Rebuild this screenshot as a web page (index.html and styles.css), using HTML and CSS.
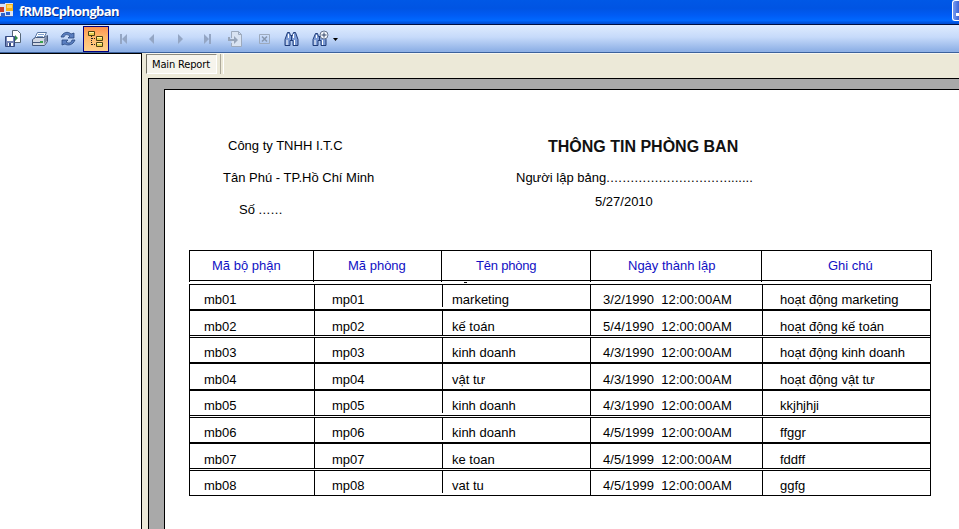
FILE: index.html
```html
<!DOCTYPE html>
<html lang="vi">
<head>
<meta charset="utf-8">
<title>fRMBCphongban</title>
<link rel="stylesheet" href="styles.css">
</head>
<body>
<div class="window">
  <header class="titlebar">
    <svg class="app-icon" width="14" height="16" viewBox="0 0 14 16"><path fill="#d9e4f7" d="M0 1h13v14H0z"/><path fill="#3a5fb5" d="M0 1h5v1H0zM0 14h13v1H0z"/><path fill="#c8402c" d="M0 5h4v5H0z"/><path fill="#f7b51c" d="M6 2h7v7H6z"/><path fill="#ffd968" d="M7 3h5v3H7z"/><path fill="#2d62cd" d="M1 11h4v3H1zM6 10h4v3H6z"/></svg>
    <span class="caption">fRMBCphongban</span>
    <span class="minimize"></span>
  </header>
  <nav class="toolbar">
    <span class="tool"><svg width="18" height="18" viewBox="0 0 18 18"><path fill="#fff" stroke="#567" d="M8.500.5h5l3 3v9h-8z"/><path fill="#2e8b45" d="M11 5l3 3-3 3V9H9V7h2z"/><path fill="#7584b5" stroke="#354a80" d="M1.500 6.500h9v10h-9z"/><path fill="#fff" d="M3 7h6v4H3zM4 13h5v3H4z"/><path fill="#354a80" d="M5 13h2v3H5z"/></svg></span>
    <span class="tool"><svg width="18" height="18" viewBox="0 0 18 18"><path fill="#fff" stroke="#5877a4" d="M6.500 2.500h9l-3 6h-9z"/><path stroke="#7da0cc" d="M7 4.500h6M6 6.500h6"/><path fill="#d2d8e4" stroke="#46597c" d="M1.500 9.500l3-2h9l3-2v6l-3 4h-12z"/><path fill="#7b8ba8" d="M13 9l3-3v5l-3 3z"/><path fill="#38a14c" d="M9 11h3v2H9z"/><path stroke="#46597c" d="M2 12.500h7"/></svg></span>
    <span class="tool"><svg width="18" height="18" viewBox="0 0 18 18"><g fill="#5b7fc1" stroke="#28477f" stroke-width=".8"><path d="M2 7C4 2 9 1 12 4l3-1v5H9l2-2C8 4 6 4 5 7z"/><path d="M16 10c-2 5-7 6-10 4l-3 1v-5h6l-2 2c3 2 5 1 6-2z"/></g></svg></span>
    <span class="tool active"><svg width="18" height="18" viewBox="0 0 18 18"><path fill="none" stroke="#222" stroke-dasharray="1 1" d="M4.500 6v10M5 8.500h4M5 14.500h4"/><path fill="#e9cf52" stroke="#4c4312" d="M1.500 1.500h6v4h-6zM9.500 6.500h6v4h-6zM9.500 12.500h6v4h-6z"/><path stroke="#fff3a2" d="M2 2.500h5M10 7.500h5M10 13.500h5"/></svg></span>
    <span class="tool"><svg width="18" height="18" viewBox="0 0 18 18"><path fill="#94a6c4" d="M5 4h2v10H5zM12 4v10L7 9z"/></svg></span>
    <span class="tool"><svg width="18" height="18" viewBox="0 0 18 18"><path fill="#94a6c4" d="M11 4v10L6 9z"/></svg></span>
    <span class="tool"><svg width="18" height="18" viewBox="0 0 18 18"><path fill="#94a6c4" d="M7 4v10l5-5z"/></svg></span>
    <span class="tool"><svg width="18" height="18" viewBox="0 0 18 18"><path fill="#94a6c4" d="M5 4v10l5-5zM10 4h2v10h-2z"/></svg></span>
    <span class="tool"><svg width="18" height="18" viewBox="0 0 18 18"><path fill="#d9e3f2" stroke="#9daabd" d="M4.500 8V1.500h7l3 3v12h-10V13M11.500 1.500v3h3"/><path fill="none" stroke="#97a5ba" stroke-width="2" d="M2 7v3h7"/><path fill="#97a5ba" d="M7 6l4 4-4 4z"/></svg></span>
    <span class="tool"><svg width="18" height="18" viewBox="0 0 18 18"><path fill="none" stroke="#9daabd" d="M4.500 4.500h10v9h-10z"/><path stroke="#8797af" stroke-width="1.600" d="M7 6.500l5 5M12 6.500l-5 5"/></svg></span>
    <span class="tool"><svg width="18" height="18" viewBox="0 0 18 18"><path fill="#7d9cd6" stroke="#203c78" d="M4.500 2.500h2l1 3h2l1-3h2l2.500 7v6h-5v-5h-3v5h-5v-6z"/><path stroke="#fff" d="M4 10v5M11.500 10v5M5.500 4v4M10.500 4v4"/><path stroke="#203c78" d="M8.500 6v4"/></svg></span>
    <span class="tool wide"><svg width="28" height="18" viewBox="0 0 28 18"><path fill="#7d9cd6" stroke="#203c78" d="M4.500 3.500h2l1 3h2l1-3h2l2.500 6v6h-5v-5h-3v5h-5v-6z"/><path stroke="#fff" d="M4 10v5M11.500 10v5M5.500 5v3"/><path stroke="#203c78" d="M8.500 7v3"/><circle cx="13" cy="5" r="4" fill="#f4f7fc" stroke="#64738f"/><path stroke="#344668" d="M13 2.500v5M10.500 5h5"/><path fill="#000" d="M22 8h5l-2.500 3z"/></svg></span>
  </nav>
  <main class="workspace">
    <aside class="group-tree"></aside>
    <section class="viewer">
      <div class="tabs"><span class="tab">Main Report</span></div>
      <div class="canvas">
        <article class="page">
          <div class="heading">
            <div class="company">
              <p class="name clip">Công ty TNHH I.T.C</p>
              <p class="address">Tân Phú - TP.Hồ Chí Minh</p>
              <p class="number">Số <span class="dots">......</span></p>
            </div>
            <div class="report">
              <h1>THÔNG TIN PHÒNG BAN</h1>
              <p class="author">Người lập bảng<span class="dots">..............................</span><span>.......</span></p>
              <p class="date">5/27/2010</p>
            </div>
          </div>
          <div class="columns"><span>Mã bộ phận</span><span>Mã phòng</span><span>Tên phòng</span><span>Ngày thành lập</span><span>Ghi chú</span></div>
          <div class="dash"></div>
          <div class="rows">
            <div class="row short"><span>mb01</span><span>mp01</span><span>marketing</span><span>3/2/1990&nbsp; 12:00:00AM</span><span>hoạt động marketing</span></div>
            <div class="row low"><span>mb02</span><span>mp02</span><span>kế toán</span><span>5/4/1990&nbsp; 12:00:00AM</span><span>hoạt động kế toán</span></div>
            <div class="row gap"><span>mb03</span><span>mp03</span><span>kinh doanh</span><span>4/3/1990&nbsp; 12:00:00AM</span><span>hoạt động kinh doanh</span></div>
            <div class="row low tall"><span>mb04</span><span>mp04</span><span>vật tư</span><span>4/3/1990&nbsp; 12:00:00AM</span><span>hoạt động vật tư</span></div>
            <div class="row short"><span>mb05</span><span>mp05</span><span>kinh doanh</span><span>4/3/1990&nbsp; 12:00:00AM</span><span>kkjhjhji</span></div>
            <div class="row gap short"><span>mb06</span><span>mp06</span><span>kinh doanh</span><span>4/5/1999&nbsp; 12:00:00AM</span><span>ffggr</span></div>
            <div class="row low"><span>mb07</span><span>mp07</span><span>ke toan</span><span>4/5/1999&nbsp; 12:00:00AM</span><span>fddff</span></div>
            <div class="row gap short"><span>mb08</span><span>mp08</span><span>vat tu</span><span>4/5/1999&nbsp; 12:00:00AM</span><span>ggfg</span></div>
          </div>
        </article>
      </div>
    </section>
  </main>
</div>
</body>
</html>
```
FILE: styles.css
```css
* { box-sizing: border-box; }
body { margin: 0; font: 13px/16px "Liberation Sans", Arial, sans-serif; color: #000; }
h1, p { margin: 0; }
svg { display: block; }

.window { width: 959px; height: 529px; overflow: hidden; display: flex; flex-direction: column; background: #ece9d8; }

.titlebar { height: 25px; flex: none; display: flex; align-items: flex-start; border-bottom: 1px solid #001040;
  background: linear-gradient(#0058e6 0, #0054e3 35%, #005cf5 65%, #0068ff 85%, #0050d8 96%); }
.app-icon { margin-top: 2px; }
.caption { margin: 3px 0 0 5px; font: bold 13px/17px "Open Sans", sans-serif; letter-spacing: -.65px; color: #fff; text-shadow: 1px 1px #0a2e86; white-space: nowrap; }
.minimize { width: 7px; height: 21px; margin-left: auto; border: 1px solid #fff; border-right: 0; border-radius: 3px 0 0 3px; background: linear-gradient(to right, #7a9cf0, #3a64d8); }
.minimize::after { content: ""; display: block; width: 3px; height: 3px; margin: 12px 0 0 3px; background: #fff; }

.toolbar { height: 28px; flex: none; display: flex; padding-left: 1px; border-bottom: 1px solid #3b619c; background: linear-gradient(#dfecff, #c6dafa 45%, #8fb1e6 95%); }
.tool { width: 28px; height: 27px; flex: none; display: flex; align-items: center; justify-content: center; padding-right: 3px; }
.tool:first-child { width: 26px; }
.tool.active { padding: 0; width: 26px; margin: 1px 2px 0 0; height: 26px; border: 1px solid #000080; background: linear-gradient(#fe914e, #ffb86b 40%, #ffd18c); }
.tool.wide { width: 36px; padding: 0; }

.workspace { flex: 1; min-height: 0; display: flex; }
.group-tree { width: 142px; flex: none; border: 1px solid #000; border-width: 1px 1px 0 0; background: #fff; }
.viewer { flex: 1; padding-left: 4px; display: flex; flex-direction: column; min-width: 0; }
.tabs { height: 25px; display: flex; border-top: 1px solid #f8f7f0; }
.tabs::after { content: ""; width: 2px; height: 20px; margin-left: 3px; border-left: 1px solid #aca899; border-right: 1px solid #fff; }
.tab { width: 71px; height: 20px; padding-left: 5px; border: 1px solid #fff; border-top-color: #8d8b80; border-left-color: #716f64; background: #f6f4ec; font: 11px/19px "DejaVu Sans Condensed", "DejaVu Sans", sans-serif; letter-spacing: -.15px; white-space: nowrap; }
.canvas { flex: 1; margin-left: 2px; padding: 10px 0 0 15px; border: 1px solid #000; border-width: 1px 0 0 1px; background: #a9a9a9; }
.page { height: 100%; border: 1px solid #000; border-width: 1px 0 0 1px; background: #fff; padding: 46px 0 0 24px; }

.heading { height: 114px; display: grid; grid-template-columns: 327px 1fr; white-space: nowrap; }
.name { margin: 2px 0 0 39px; }
.clip { height: 15px; overflow: hidden; }
.address { margin: 17px 0 0 34px; }
.number { margin: 16px 0 0 50px; }
.report h1 { margin: 1px 0 0 32px; font-size: 16px; line-height: 20px; color: #111; }
.author { margin-top: 13px; }
.dots { letter-spacing: .43px; }
.date { margin: 8px 0 0 79px; }

.columns { width: 743px; height: 31px; display: grid; grid-template-columns: 124px 128px 149px 171px 171px; border: 1px solid #000; border-width: 1px 1px 1px 0; color: #1010c4; white-space: nowrap; }
.columns span { margin: -1px 0; padding-top: 8px; border-left: 1px solid #000; height: 32px; }
.columns span:nth-child(1) { padding-left: 22px; }
.columns span:nth-child(2) { padding-left: 34px; }
.columns span:nth-child(3) { padding-left: 34px; letter-spacing: -.2px; }
.columns span:nth-child(4) { padding-left: 37px; }
.columns span:nth-child(5) { padding-left: 66px; }
.dash { width: 3px; height: 1px; margin: 1px 0 1px 275px; background: #000; }

.rows { width: 742px; border-right: 1px solid #000; border-left: 1px solid #000; }
.row { height: 26px; display: grid; grid-template-columns: 124px 128px 148px 172px 1fr; border: 1px solid #000; border-width: 1px 0; white-space: nowrap; }
.row.tall { height: 27px; }
.row.gap { margin-top: 1px; }
.row span { padding: 7px 0 0 17px; border-left: 1px solid #000; line-height: 16px; overflow: hidden; }
.row.low span { padding-top: 8px; }
.row span:first-child { padding-left: 14px; border-left: 0; }
.row span:nth-child(3) { padding-left: 9px; }
.row.short span:nth-child(3) { margin-bottom: 2px; }
.row span:nth-child(4) { padding-left: 12px; letter-spacing: .05px; }
```
